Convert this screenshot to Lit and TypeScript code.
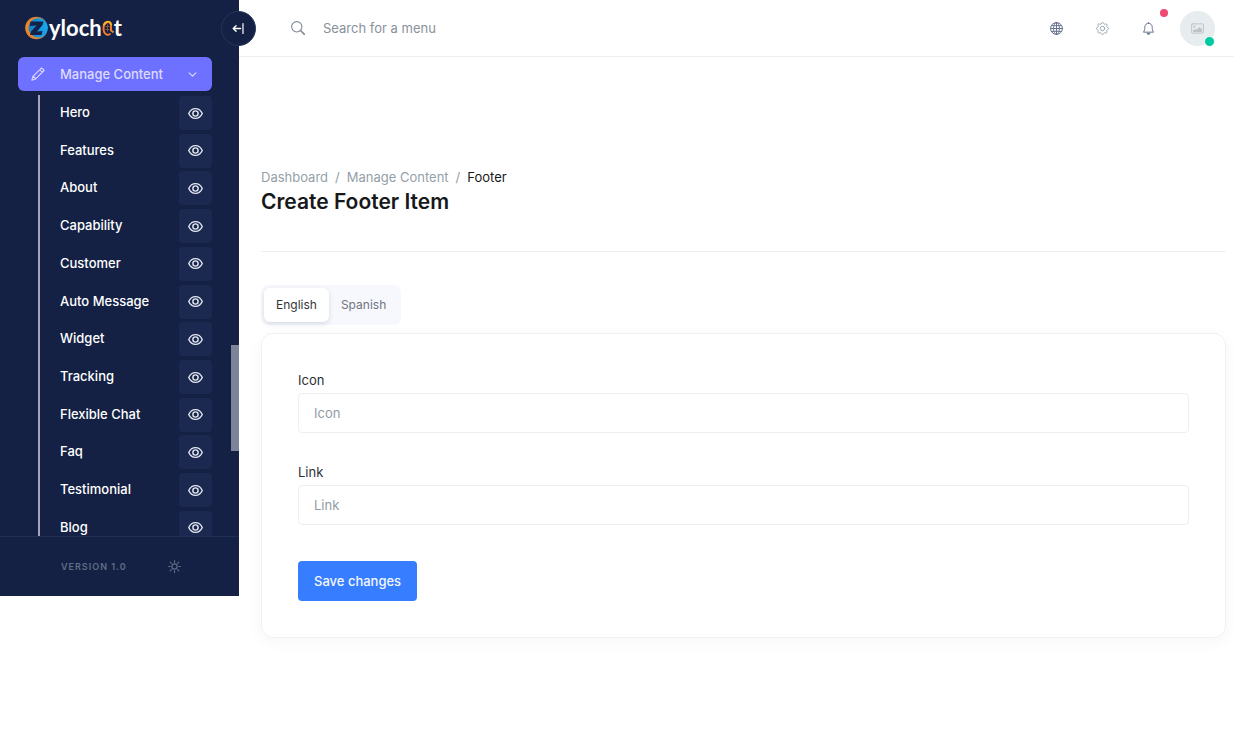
import { LitElement, html, css, svg } from "lit";
import { customElement, state } from "lit/decorators.js";

const icon = (size: number, body: unknown) => html`<svg
  width=${size}
  height=${size}
  viewBox="0 0 16 16"
  fill="none"
  stroke="currentColor"
  stroke-width="1.2"
  stroke-linecap="round"
  stroke-linejoin="round"
  aria-hidden="true"
>${body}</svg>`;

const shapes = {
  search: svg`<circle cx="6.6" cy="6.6" r="5.9"/><path d="M10.9 10.9 15.3 15.3" stroke-width="1.7"/>`,
  globe: svg`<circle cx="8" cy="8" r="7.3"/><ellipse cx="8" cy="8" rx="3.6" ry="7.3"/><path d="M8 .7v14.600M.7 8h14.600M1.6 4.5h12.8M1.6 11.5h12.8"/>`,
  gear: svg`<circle cx="8" cy="8" r="2.7"/><path d="M6.7 1.5c.4-1.3 2.2-1.3 2.6 0l.1.4c.2.8 1.2 1.2 1.9.8l.3-.2c1.2-.6 2.5.7 1.9 1.9l-.2.3c-.4.7 0 1.7.8 1.9l.4.1c1.3.4 1.3 2.2 0 2.6l-.4.1c-.8.2-1.2 1.2-.8 1.9l.2.3c.6 1.2-.7 2.5-1.9 1.9l-.3-.2c-.7-.4-1.7 0-1.9.8l-.1.4c-.4 1.3-2.2 1.3-2.6 0l-.1-.4c-.2-.8-1.2-1.2-1.9-.8l-.3.2c-1.2.6-2.5-.7-1.9-1.9l.2-.3c.4-.7 0-1.7-.8-1.9l-.4-.1c-1.3-.4-1.3-2.2 0-2.6l.4-.1c.8-.2 1.2-1.2.8-1.9l-.2-.3C1.9 3.200 3.200 1.900 4.400 2.500l.3.2c.7.4 1.700 0 1.900-.8Z"/>`,
  bell: svg`<path d="M8 1.500C5.500 1.500 3.500 3.500 3.500 6c0 2.500-.4 5-1.700 6.500h12.400C12.900 11 12.500 8.500 12.500 6c0-2.500-2-4.500-4.500-4.500Z"/><path d="M8 .6v.9M6.300 14.300c.4 1.400 3 1.400 3.400 0Z" fill="currentColor"/>`,
  image: svg`<rect x=".8" y="2.300" width="14.400" height="11.400" rx="1"/><circle cx="4.200" cy="5.700" r="1.300" fill="currentColor" stroke="none"/><path d="M2.500 12.200V10.500l2.500-2 2 1 3.500-3.500 3 3V12.200Z" fill="currentColor" stroke="none"/>`,
  pencil: svg`<path d="M12.100.900 15.100 3.900 5.300 13.700.900 15.100 2.300 10.700ZM10 3l3 3M2.500 10.500 5.500 13.500"/>`,
  chevron: svg`<path d="M2 5l6 6 6-6" stroke-width="2"/>`,
  eye: svg`<path d="M.800 8S3.200 2.800 8 2.800 15.200 8 15.200 8 12.800 13.200 8 13.200.800 8 .800 8Z" stroke-width="1.500"/><circle cx="8" cy="8" r="2.800" stroke-width="1.500"/>`,
  sun: svg`<circle cx="8" cy="8" r="3.200" stroke-width="1.400"/><path d="M8 .700v2M8 13.300v2M.700 8h2M13.300 8h2M2.700 2.700 4.100 4.100M11.900 11.900l1.400 1.400M13.300 2.700 11.900 4.100M4.100 11.900 2.700 13.300" stroke-width="1.400"/>`,
  collapse: svg`<path d="M1.500 8h9M5 4.500 1.500 8 5 11.500" stroke-width="1.700"/><path d="M13.500 2v12" stroke-width="1.500"/>`,
};

const SECTIONS = [
  "Hero", "Features", "About", "Capability", "Customer", "Auto Message",
  "Widget", "Tracking", "Flexible Chat", "Faq", "Testimonial", "Blog",
];

@customElement("side-bar")
class SideBar extends LitElement {
  static styles = css`
    :host {
      position: relative;
      display: flex;
      flex-direction: column;
      height: 80vh;
      background: #142144;
      color: #fff;
    }
    * { box-sizing: border-box; }
    svg { display: block; }
    a { color: inherit; text-decoration: none; }
    button { font: inherit; border: 0; padding: 0; cursor: pointer; }
    .brand {
      display: flex;
      align-items: center;
      flex: none;
      height: 55px;
      margin-bottom: 2px;
      padding: 0 25px;
      font: 700 22px/24px Lato, sans-serif;
    }
    .collapse {
      position: absolute;
      z-index: 2;
      top: 11px;
      right: -17px;
      display: grid;
      place-items: center;
      width: 35px;
      height: 35px;
      border: 1px solid #24345a;
      border-radius: 50%;
      background: #142144;
      color: #fff;
    }
    .group {
      display: flex;
      align-items: center;
      flex: none;
      height: 34px;
      margin: 0 27px 4px 18px;
      padding: 0 15px 0 13px;
      border-radius: 6px;
      background: #6e70ff;
      color: #dcdcff;
      font-weight: 500;
      text-align: left;
    }
    .group span { flex: 1; margin-left: 15px; }
    .scroller { flex: 1; min-height: 0; overflow: hidden; padding: 0 27px 0 38px; }
    .list {
      display: flex;
      flex-direction: column;
      justify-content: space-between;
      height: 450px;
      margin: 0;
      padding: 1px 0 0 20px;
      border-left: 2px solid #a1a7b4;
      list-style: none;
    }
    .row { display: flex; justify-content: space-between; height: 34px; font-weight: 500; }
    .row a { line-height: 32px; }
    .view {
      display: grid;
      place-items: center;
      width: 33px;
      height: 34px;
      border-radius: 4px;
      background: #1b2951;
      color: #e4e7ef;
    }
    .thumb {
      position: absolute;
      right: 0;
      top: 345px;
      width: 8px;
      height: 106px;
      background: #7b8498;
    }
    .foot {
      display: flex;
      align-items: center;
      gap: 41px;
      flex: none;
      height: 60px;
      padding: 0 61px;
      border-top: 1px solid #202f55;
      color: #626d87;
      font-size: 9px;
      font-weight: 600;
      letter-spacing: 1px;
      white-space: nowrap;
    }
    .theme { background: none; color: #626d87; }
  `;

  render() {
    return html`
      <a class="brand" href="#" aria-label="Zylochat">
        <svg width="24" height="24" viewBox="0 0 24 24">
          <defs>
            <linearGradient id="ring" x1="0" x2="1"><stop offset="0" stop-color="#f5851f"/><stop offset=".5" stop-color="#d8843a"/><stop offset="1" stop-color="#129be4"/></linearGradient>
            <linearGradient id="disc" x1="0" x2="1"><stop offset="0" stop-color="#147ec4"/><stop offset="1" stop-color="#19a9ef"/></linearGradient>
          </defs>
          <circle cx="11.500" cy="12" r="11.300" fill="url(#ring)"/>
          <circle cx="13" cy="11.800" r="9.500" fill="url(#disc)"/>
          <path d="M5.500 5.500 18.500 5.500 17.500 9 12 15.500 17.500 15 16.500 19 5 19 6 15.500 11.500 9.500 5 10Z" fill="#122248"/>
        </svg>
        <span>yloch</span>
        <svg width="12" height="24" viewBox="0 0 12 24" fill="none">
          <path d="M8.500 17.500C6.500 20 1.500 19 1.500 12 1.500 5.500 8.500 4 9 9V14.500L11.500 16.500" stroke="#ee7d2a" stroke-width="2"/>
          <path d="M1.700 9.500C3 5 8.500 4 9 9" stroke="#f4ae28" stroke-width="2"/>
          <path d="M3.500 10.500H7.500M3.500 13.500H7.500M5.500 8.500V15.500" stroke="#8a5238"/>
        </svg>
        <span>t</span>
      </a>
      <button class="collapse" aria-label="Collapse sidebar">${icon(13, shapes.collapse)}</button>
      <button class="group" aria-expanded="true">
        ${icon(14, shapes.pencil)}<span>Manage Content</span>${icon(9, shapes.chevron)}
      </button>
      <nav class="scroller" aria-label="Manage content">
        <ul class="list">
          ${SECTIONS.map((name) => html`
            <li class="row">
              <a href="#">${name}</a>
              <a class="view" href="#" aria-label="View ${name}">${icon(15, shapes.eye)}</a>
            </li>`)}
        </ul>
      </nav>
      <div class="thumb"></div>
      <div class="foot">
        <span>VERSION 1.0</span>
        <button class="theme" aria-label="Toggle theme">${icon(13, shapes.sun)}</button>
      </div>
    `;
  }
}

@customElement("top-bar")
class TopBar extends LitElement {
  static styles = css`
    :host {
      display: flex;
      align-items: center;
      height: 57px;
      box-sizing: border-box;
      padding: 0 19px 0 52px;
      border-bottom: 1px solid #eeeff1;
    }
    svg { display: block; }
    button { border: 0; padding: 0; background: none; color: inherit; cursor: pointer; }
    .search { display: flex; align-items: center; flex: 1; gap: 18px; color: #7d8794; }
    .search input {
      flex: 1;
      min-width: 0;
      border: 0;
      padding: 0;
      outline: 0;
      background: none;
      font: inherit;
      color: #16181a;
    }
    .search input::placeholder { color: #88919a; opacity: 1; }
    .tools { display: flex; align-items: center; gap: 33px; color: #66718d; }
    .soft { color: #9aa3b5; }
    .bell { position: relative; }
    .alert {
      position: absolute;
      top: -13px;
      right: -13px;
      width: 8px;
      height: 8px;
      border-radius: 50%;
      background: #ee4a72;
    }
    .avatar {
      position: relative;
      display: grid;
      place-items: center;
      width: 35px;
      height: 35px;
      margin-left: -8px;
      border-radius: 50%;
      background: #e7ecef;
      color: #bcc2c6;
    }
    .online {
      position: absolute;
      right: 0;
      bottom: -1px;
      width: 9px;
      height: 9px;
      border: 1px solid #fff;
      border-radius: 50%;
      background: #00c9a0;
    }
  `;

  render() {
    return html`
      <label class="search">${icon(14, shapes.search)}<input type="search" placeholder="Search for a menu" aria-label="Search for a menu" /></label>
      <div class="tools">
        <button aria-label="Language">${icon(13, shapes.globe)}</button>
        <button class="soft" aria-label="Settings">${icon(13, shapes.gear)}</button>
        <button class="bell" aria-label="Notifications">${icon(13, shapes.bell)}<span class="alert"></span></button>
        <button class="avatar" aria-label="Account">${icon(13, shapes.image)}<span class="online"></span></button>
      </div>
    `;
  }
}

@customElement("app-root")
class AppRoot extends LitElement {
  @state() private language = "English";

  static styles = css`
    :host {
      display: grid;
      grid-template-columns: 239px minmax(0, 1fr);
      align-items: start;
      min-height: 100vh;
      background: #fff;
      color: #16181a;
      font: 400 13px/20px Inter, sans-serif;
    }
    * { box-sizing: border-box; }
    button { font: inherit; border: 0; cursor: pointer; }
    .page { padding: 110px 8px 32px 22px; }
    .crumbs { display: flex; gap: 7px; color: #95a0a8; }
    .crumbs a { color: inherit; text-decoration: none; }
    .crumbs .here { color: #16181a; }
    h1 { margin: 0; font-size: 21px; font-weight: 600; line-height: 30px; }
    .head { padding-bottom: 34px; border-bottom: 1px solid #eeeff2; }
    .tabs {
      display: inline-flex;
      margin: 33px 0 8px;
      padding: 3px;
      border-radius: 8px;
      background: #f7f8fd;
      font-size: 12px;
      vertical-align: top;
    }
    .tab { height: 34px; padding: 0 12px; border-radius: 6px; background: none; color: #6d7580; }
    .tab[aria-selected="true"] { background: #fff; color: #303438; box-shadow: 0 2px 5px #1d294524; }
    .card {
      padding: 36px;
      border: 1px solid #eff1f5;
      border-radius: 12px;
      box-shadow: 0 4px 16px #1d29450a;
    }
    .field { display: grid; gap: 3px; margin-bottom: 29px; }
    .field label { color: #2c3036; }
    .field input {
      width: 100%;
      height: 40px;
      padding: 0 15px;
      border: 1px solid #eeeff2;
      border-radius: 4px;
      background: #fff;
      color: #16181a;
      font: inherit;
    }
    .field input::placeholder { color: #929ba3; opacity: 1; }
    .save {
      display: block;
      height: 40px;
      margin-top: 36px;
      padding: 0 16px;
      border-radius: 4px;
      background: #377dff;
      color: #f4f8ff;
      font-weight: 500;
    }
  `;

  render() {
    return html`
      <side-bar></side-bar>
      <div>
        <top-bar></top-bar>
        <main class="page">
          <header class="head">
            <nav class="crumbs" aria-label="Breadcrumb">
              <a href="#">Dashboard</a><span>/</span><a href="#">Manage Content</a><span>/</span><span class="here">Footer</span>
            </nav>
            <h1>Create Footer Item</h1>
          </header>
          <div class="tabs" role="tablist">
            ${["English", "Spanish"].map((name) => html`
              <button class="tab" role="tab" aria-selected=${this.language === name} @click=${() => (this.language = name)}>${name}</button>`)}
          </div>
          <form class="card" @submit=${(e: Event) => e.preventDefault()}>
            <div class="field"><label for="icon">Icon</label><input id="icon" placeholder="Icon" /></div>
            <div class="field"><label for="link">Link</label><input id="link" placeholder="Link" /></div>
            <button class="save" type="submit">Save changes</button>
          </form>
        </main>
      </div>
    `;
  }
}
